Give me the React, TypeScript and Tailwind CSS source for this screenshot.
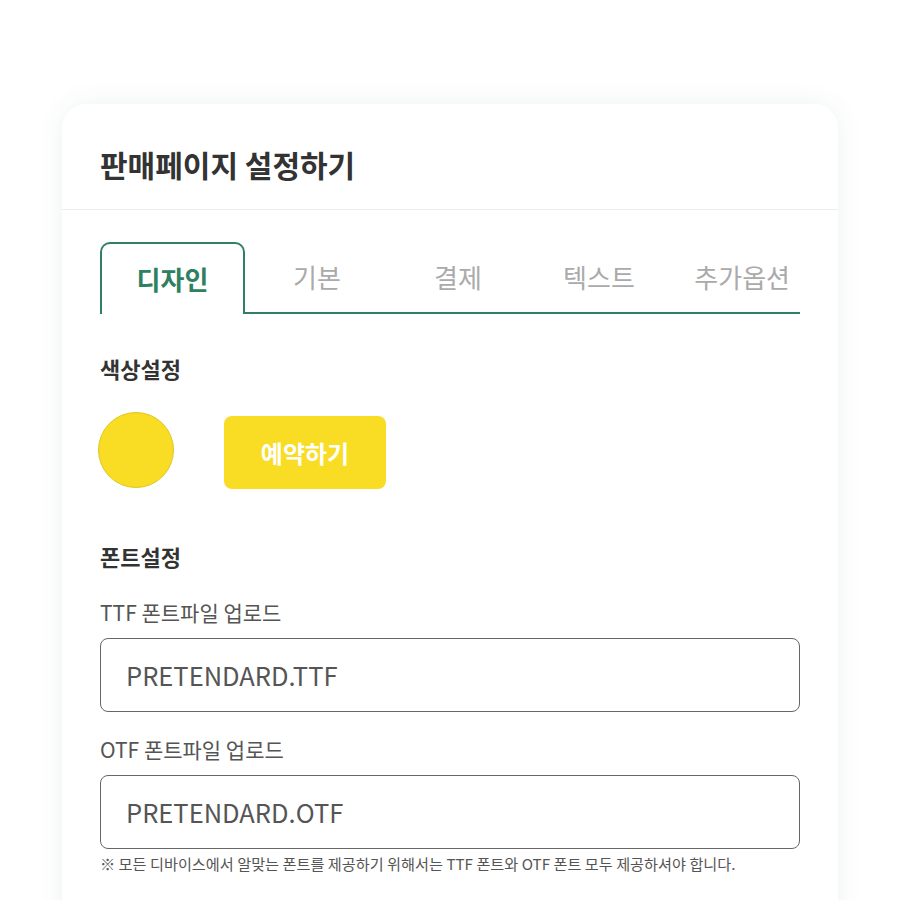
import React from "react";

const font = { fontFamily: '"Noto Sans CJK KR", "Noto Sans", sans-serif' };

export default function App() {
  const tabs = [
    { label: "기본", w: "w-[144px]" },
    { label: "결제", w: "w-[138px]" },
    { label: "텍스트", w: "w-[144px]" },
  ];
  return (
    <div className="w-[900px] h-[900px] overflow-hidden bg-white pt-[104px] px-[62px]" style={font}>
      <div className="h-[830px] rounded-[24px] bg-white shadow-[0_0_28px_rgba(20,80,60,0.07)]">
        <div className="h-[106px] border-b border-[#ececec] px-[38px] pt-[43px]">
          <h1 className="text-[30px] leading-[34px] font-bold text-[#333]">판매페이지 설정하기</h1>
        </div>
        <div className="px-[38px]">
          <div className="mt-[32px] flex h-[72px]">
            <div className="w-[145px] h-[72px] border-[2.5px] border-b-0 border-[#2e8060] rounded-t-[10px] flex items-center justify-center">
              <span className="text-[26px] font-bold text-[#2e8060] leading-none">디자인</span>
            </div>
            {tabs.map((t) => (
              <div key={t.label} className={`${t.w} h-[72px] border-b-[2.5px] border-[#2e8060] flex items-center justify-center`}>
                <span className="text-[26px] text-[#aaa] leading-none">{t.label}</span>
              </div>
            ))}
            <div className="flex-1 h-[72px] border-b-[2.5px] border-[#2e8060] flex items-center justify-end pr-[10px]">
              <span className="text-[26px] text-[#aaa] leading-none">추가옵션</span>
            </div>
          </div>

          <h2 className="mt-[40px] text-[22px] leading-[28px] font-bold text-[#333]">색상설정</h2>
          <div className="mt-[30px] flex items-start">
            <div className="-ml-[2px] w-[76px] h-[76px] rounded-full bg-[#f9dc24] border border-[#e2c51e]" />
            <button className="ml-[50px] mt-[4px] w-[162px] h-[73px] rounded-[8px] bg-[#f9dc24] text-white text-[24px] font-bold">
              예약하기
            </button>
          </div>

          <h2 className="mt-[53px] text-[22px] leading-[28px] font-bold text-[#333]">폰트설정</h2>
          <div className="mt-[28px] text-[21px] leading-[28px] text-[#555]">TTF 폰트파일 업로드</div>
          <div className="mt-[12px] h-[74px] rounded-[8px] border border-[#666] flex items-center px-[25px]">
            <span className="text-[25.5px] text-[#555]">PRETENDARD.TTF</span>
          </div>
          <div className="mt-[23px] text-[21px] leading-[28px] text-[#555]">OTF 폰트파일 업로드</div>
          <div className="mt-[12px] h-[74px] rounded-[8px] border border-[#666] flex items-center px-[25px]">
            <span className="text-[25.5px] text-[#555]">PRETENDARD.OTF</span>
          </div>
          <p className="mt-[4px] text-[15.2px] leading-[20px] text-[#555] whitespace-nowrap">
            ※ 모든 디바이스에서 알맞는 폰트를 제공하기 위해서는 TTF 폰트와 OTF 폰트 모두 제공하셔야 합니다.
          </p>
        </div>
      </div>
    </div>
  );
}
